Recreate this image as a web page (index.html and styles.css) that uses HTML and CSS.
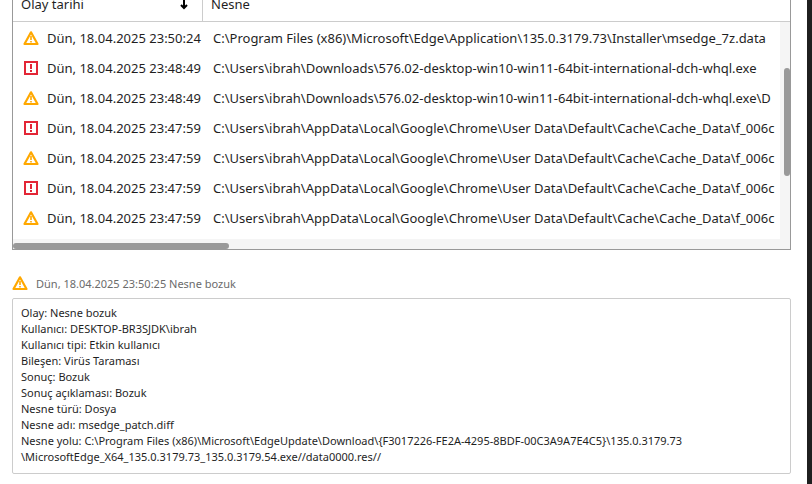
FILE: index.html
```html
<!DOCTYPE html>
<html lang="tr">
<head>
  <meta charset="UTF-8" />
  <meta name="viewport" content="width=device-width, initial-scale=1.0"/>
  <title>Rapor</title>
  <link rel="stylesheet" href="styles.css">
</head>
<body>

  <!-- Shared icons -->
  <svg class="sprite" aria-hidden="true">
    <symbol id="warning" viewBox="0 0 16 16">
      <path d="M8 2.300 14.500 14H1.500Z" fill="none" stroke="#ffa800" stroke-width="2.200" stroke-linejoin="round"/>
      <path d="M7.200 6h1.600v4H7.200zM7.200 11h1.600v1.500H7.200z" fill="#ffa800"/>
    </symbol>
    <symbol id="critical" viewBox="0 0 16 16">
      <path d="M2 2h12v12H2z" fill="none" stroke="#e32636" stroke-width="2"/>
      <path d="M7 4h2v5H7zM7 10h2v2H7z" fill="#e32636"/>
    </symbol>
  </svg>

  <main class="window">

    <!-- Event list -->
    <section class="log">
      <div class="log-view">
        <table class="log-table">
          <thead>
            <tr>
              <th class="col-date">
                <div class="sort">
                  <span>Olay tarihi</span>
                  <svg class="arrow" viewBox="0 0 8 12"><path d="M4 0v10M1 7l3 3 3-3" fill="none" stroke="#000" stroke-width="2"/></svg>
                </div>
              </th>
              <th>Nesne</th>
            </tr>
          </thead>
          <tbody>
            <tr>
              <td><div class="event"><svg class="icon"><use href="#warning"/></svg>Dün, 18.04.2025 23:50:24</div></td>
              <td>C:\Program Files (x86)\Microsoft\Edge\Application\135.0.3179.73\Installer\msedge_7z.data</td>
            </tr>
            <tr>
              <td><div class="event"><svg class="icon"><use href="#critical"/></svg>Dün, 18.04.2025 23:48:49</div></td>
              <td>C:\Users\ibrah\Downloads\576.02-desktop-win10-win11-64bit-international-dch-whql.exe</td>
            </tr>
            <tr>
              <td><div class="event"><svg class="icon"><use href="#warning"/></svg>Dün, 18.04.2025 23:48:49</div></td>
              <td>C:\Users\ibrah\Downloads\576.02-desktop-win10-win11-64bit-international-dch-whql.exe\D</td>
            </tr>
            <tr>
              <td><div class="event"><svg class="icon"><use href="#critical"/></svg>Dün, 18.04.2025 23:47:59</div></td>
              <td>C:\Users\ibrah\AppData\Local\Google\Chrome\User Data\Default\Cache\Cache_Data\f_006c</td>
            </tr>
            <tr>
              <td><div class="event"><svg class="icon"><use href="#warning"/></svg>Dün, 18.04.2025 23:47:59</div></td>
              <td>C:\Users\ibrah\AppData\Local\Google\Chrome\User Data\Default\Cache\Cache_Data\f_006c</td>
            </tr>
            <tr>
              <td><div class="event"><svg class="icon"><use href="#critical"/></svg>Dün, 18.04.2025 23:47:59</div></td>
              <td>C:\Users\ibrah\AppData\Local\Google\Chrome\User Data\Default\Cache\Cache_Data\f_006c</td>
            </tr>
            <tr>
              <td><div class="event"><svg class="icon"><use href="#warning"/></svg>Dün, 18.04.2025 23:47:59</div></td>
              <td>C:\Users\ibrah\AppData\Local\Google\Chrome\User Data\Default\Cache\Cache_Data\f_006c</td>
            </tr>
          </tbody>
        </table>
      </div>
      <div class="log-side">
        <div class="head-end"></div>
        <div class="track-y"><div class="thumb"></div></div>
      </div>
      <div class="track-x"><div class="thumb"></div></div>
    </section>

    <!-- Selected event -->
    <section class="detail">
      <h2 class="detail-title"><svg class="icon"><use href="#warning"/></svg>Dün, 18.04.2025 23:50:25 Nesne bozuk</h2>
      <div class="detail-box">
        <p>Olay: Nesne bozuk</p>
        <p>Kullanıcı: DESKTOP-BR3SJDK\ibrah</p>
        <p>Kullanıcı tipi: Etkin kullanıcı</p>
        <p>Bileşen: Virüs Taraması</p>
        <p>Sonuç: Bozuk</p>
        <p>Sonuç açıklaması: Bozuk</p>
        <p>Nesne türü: Dosya</p>
        <p>Nesne adı: msedge_patch.diff</p>
        <p>Nesne yolu: C:\Program Files (x86)\Microsoft\EdgeUpdate\Download\{F3017226-FE2A-4295-8BDF-00C3A9A7E4C5}\135.0.3179.73<br>\MicrosoftEdge_X64_135.0.3179.73_135.0.3179.54.exe//data0000.res//</p>
      </div>
    </section>

  </main>

</body>
</html>
```
FILE: styles.css
```css
:root {
  --text: #1f1f1f;
  --muted: #6b6b6b;
  --line: #ccc;
  --frame: #999;
  --track: #f5f5f5;
}

* {
  box-sizing: border-box;
}

body {
  margin: 0;
  height: 100vh;
  overflow: hidden;
  background: #1f1f1f;
  color: var(--text);
  font-family: "Noto Sans", "Open Sans", sans-serif;
  font-size: 13px;
}

.sprite {
  display: none;
}

.window {
  min-height: 100%;
  margin-right: 5px;
  padding: 0 16px 0 12px;
  background: #fff;
  display: flow-root;
}

.icon {
  width: 16px;
  height: 16px;
  flex: none;
}

/* Event list, its header is partly scrolled out */
.log {
  display: grid;
  grid-template-columns: minmax(0, 1fr) 10px;
  margin-top: -13px;
  border: 1px solid var(--frame);
}

.log-view {
  overflow: hidden;
  padding-bottom: 7px;
}

.log-table {
  width: 100%;
  table-layout: fixed;
  border-collapse: separate;
  border-spacing: 0;
  white-space: nowrap;
}

.log-table th {
  height: 34px;
  padding: 0 8px 2px;
  border-bottom: 1px solid var(--line);
  text-align: left;
  font-weight: normal;
}

.log-table .col-date {
  width: 190px;
  border-right: 1px solid var(--line);
}

.sort {
  display: flex;
  justify-content: space-between;
  align-items: center;
  padding-right: 6px;
}

.arrow {
  width: 8px;
  height: 12px;
}

.log-table td {
  height: 30px;
  padding: 2px 0 0 10px;
  overflow: hidden;
}

.event {
  display: flex;
  align-items: center;
  gap: 8px;
}

/* Scrollbars */
.log-side {
  display: flex;
  flex-direction: column;
}

.head-end {
  height: 34px;
  border-bottom: 1px solid var(--line);
}

.track-y {
  flex: 1;
  display: grid;
  grid-template-rows: 46fr 108fr 63fr;
  padding-left: 4px;
  background: var(--track);
}

.track-y .thumb {
  grid-row: 2;
}

.track-x {
  grid-column: 1 / -1;
  display: grid;
  grid-template-columns: 216fr 561fr;
  height: 10px;
  padding-top: 4px;
  background: var(--track);
}

.thumb {
  background: #999;
  border-radius: 3px;
}

/* Selected event */
.detail {
  margin-top: 23px;
  font-size: 11px;
}

.detail-title {
  display: flex;
  align-items: center;
  gap: 8px;
  height: 20px;
  margin: 0 0 5px;
  color: var(--muted);
  font-size: 11px;
  font-weight: normal;
}

.detail-box {
  padding: 6px 8px 8px;
  border: 1px solid var(--line);
  border-radius: 2px;
  line-height: 16px;
}

.detail-box p {
  margin: 0;
}
```
